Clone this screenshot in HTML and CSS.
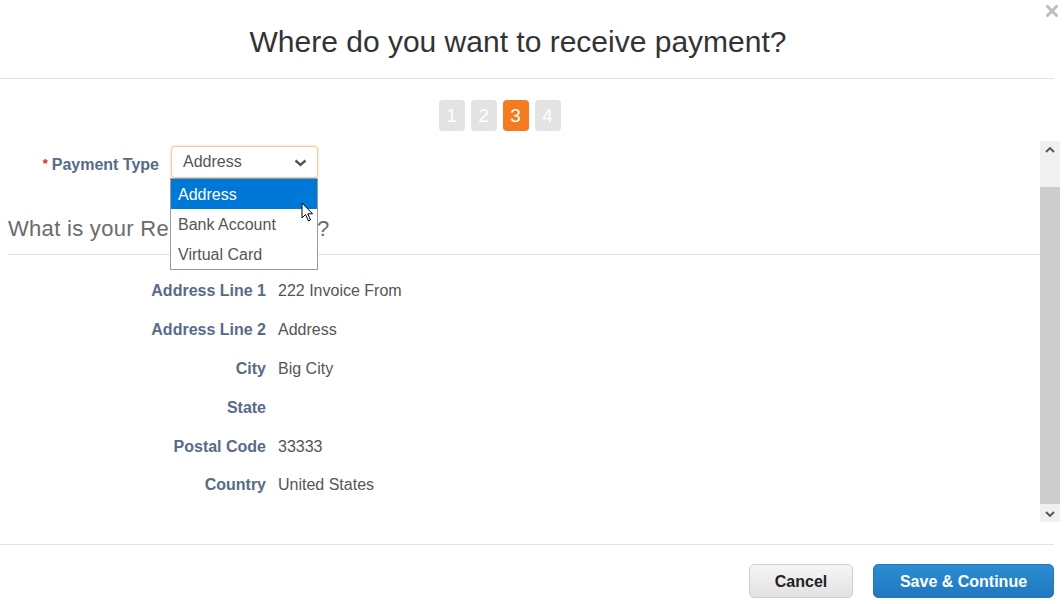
FILE: index.html
```html
<!DOCTYPE html>
<html>
<head>
<meta charset="utf-8">
<link rel="stylesheet" href="styles.css">
</head>
<body>
<div class="modal">
  <button class="close" aria-label="Close">
    <svg width="12" height="12" viewBox="0 0 12 12"><path d="M1.5 1.5 L10.5 10.5 M10.5 1.5 L1.5 10.5" stroke="#bdbdbd" stroke-width="3" stroke-linecap="square"/></svg>
  </button>
  <header class="header">
    <h1 class="title">Where do you want to receive payment?</h1>
  </header>
  <nav class="steps">
    <span class="step">1</span>
    <span class="step">2</span>
    <span class="step active">3</span>
    <span class="step">4</span>
  </nav>
  <div class="scroll-area">
    <div class="content">
      <div class="type-row">
        <label class="type-label"><span class="req">*</span>Payment Type</label>
        <div class="select-wrap">
          <div class="select">
            <span>Address</span>
            <svg class="chev" width="13" height="8" viewBox="0 0 13 8"><path d="M1.5 1.5 L6.5 6 L11.5 1.5" fill="none" stroke="#555" stroke-width="2.4"/></svg>
          </div>
          <ul class="options">
            <li class="opt selected">Address</li>
            <li class="opt">Bank Account</li>
            <li class="opt">Virtual Card</li>
          </ul>
          <svg class="cursor" width="14" height="21" viewBox="0 0 14 21"><path d="M1 1 L1 16 L4.5 12.5 L7.5 19 L9.5 18 L6.8 11.8 L11.5 11.8 Z" fill="#fff" stroke="#000" stroke-width="1" stroke-linejoin="miter"/></svg>
        </div>
      </div>
      <h2 class="section-title">What is your Remit To Address?</h2>
      <dl class="fields">
        <div class="field"><dt>Address Line 1</dt><dd>222 Invoice From</dd></div>
        <div class="field"><dt>Address Line 2</dt><dd>Address</dd></div>
        <div class="field"><dt>City</dt><dd>Big City</dd></div>
        <div class="field"><dt>State</dt><dd></dd></div>
        <div class="field"><dt>Postal Code</dt><dd>33333</dd></div>
        <div class="field"><dt>Country</dt><dd>United States</dd></div>
      </dl>
    </div>
    <div class="scrollbar">
      <div class="sb-btn">
        <svg width="10" height="6" viewBox="0 0 10 6"><path d="M1 5 L5 1 L9 5" fill="none" stroke="#505050" stroke-width="1.8"/></svg>
      </div>
      <div class="sb-track">
        <div class="sb-thumb"></div>
      </div>
      <div class="sb-btn">
        <svg width="10" height="6" viewBox="0 0 10 6"><path d="M1 1 L5 5 L9 1" fill="none" stroke="#505050" stroke-width="1.8"/></svg>
      </div>
    </div>
  </div>
  <footer class="footer">
    <button class="btn btn-cancel">Cancel</button>
    <button class="btn btn-primary">Save &amp; Continue</button>
  </footer>
</div>
</body>
</html>
```

FILE: styles.css
```css
* { box-sizing: border-box; }
html, body {
  margin: 0;
  padding: 0;
  background: #fff;
}
body {
  font-family: "Liberation Sans", Arial, sans-serif;
  color: #333;
}
.modal {
  position: relative;
  width: 1060px;
  height: 604px;
  overflow: hidden;
}
.close {
  position: absolute;
  top: 5px;
  left: 1046px;
  width: 12px;
  height: 12px;
  padding: 0;
  border: 0;
  background: none;
  display: flex;
}
.header {
  width: 1054px;
  height: 79px;
  border-bottom: 1px solid #e3e3e3;
  display: flex;
  align-items: center;
  justify-content: center;
  padding-right: 18px;
  padding-top: 6px;
}
.title {
  margin: 0;
  font-size: 30px;
  font-weight: normal;
  color: #333;
}
.steps {
  display: flex;
  justify-content: center;
  gap: 6px;
  margin-top: 21px;
  margin-bottom: 10px;
  width: 1054px;
  padding-right: 55px;
}
.step {
  width: 26px;
  height: 31px;
  border-radius: 4px;
  background: #e3e3e3;
  color: #fff;
  font-size: 19px;
  display: flex;
  align-items: center;
  justify-content: center;
}
.step.active {
  background: #f47b20;
}
.scroll-area {
  display: flex;
  height: 381px;
}
.content {
  flex: 1;
  min-width: 0;
}
.type-row {
  display: flex;
  align-items: center;
  padding-top: 5px;
}
.type-label {
  width: 171px;
  padding-right: 12px;
  text-align: right;
  font-weight: bold;
  font-size: 16px;
  color: #576b88;
  padding-top: 6px;
}
.req {
  color: #e0242b;
  font-size: 13px;
  margin-right: 4px;
  vertical-align: 2px;
}
.select-wrap {
  position: relative;
}
.select {
  width: 147px;
  height: 32px;
  border: 1px solid #f2c9a8;
  border-radius: 4px;
  box-shadow: 0 0 3px rgba(244, 123, 32, 0.35);
  display: flex;
  align-items: center;
  justify-content: space-between;
  padding: 0 10px 0 11px;
  font-size: 16px;
  color: #555;
  background: #fff;
}
.chev { margin-top: 2px; }
.options {
  position: absolute;
  top: 32px;
  left: -1px;
  width: 148px;
  margin: 0;
  padding: 0;
  list-style: none;
  border: 1px solid #9a9a9a;
  background: #fff;
  z-index: 5;
}
.opt {
  height: 30px;
  line-height: 31px;
  padding-left: 7px;
  font-size: 16px;
  color: #555;
}
.opt.selected {
  background: #0078d7;
  color: #fff;
}
.cursor {
  position: absolute;
  top: 56px;
  left: 130px;
  z-index: 6;
}
.section-title {
  margin: 36px 0 0 8px;
  padding-bottom: 10px;
  line-height: 30px;
  font-size: 22px;
  letter-spacing: 0.3px;
  font-weight: normal;
  color: #6b6b6b;
  border-bottom: 1px solid #e3e3e3;
}
.fields {
  margin: 0;
  padding-top: 17px;
}
.field {
  display: flex;
  height: 38.8px;
  align-items: center;
  font-size: 16px;
}
.field dt {
  width: 266px;
  text-align: right;
  font-weight: bold;
  color: #576b88;
}
.field dd {
  margin: 0 0 0 12px;
  color: #555;
}
.scrollbar {
  width: 20px;
  display: flex;
  flex-direction: column;
  background: #f0f0f0;
}
.sb-btn {
  height: 17px;
  display: flex;
  align-items: center;
  justify-content: center;
}
.sb-track {
  flex: 1;
  padding-top: 29px;
  padding-bottom: 1px;
  display: flex;
  flex-direction: column;
}
.sb-thumb {
  flex: 1;
  background: #cdcdcd;
}
.footer {
  width: 1054px;
  margin-top: 22px;
  border-top: 1px solid #e3e3e3;
  padding-top: 19px;
  display: flex;
  justify-content: flex-end;
  gap: 20px;
}
.btn {
  height: 34px;
  border-radius: 5px;
  font-family: "Liberation Sans", Arial, sans-serif;
  font-size: 16px;
  font-weight: bold;
  padding-top: 2px;
  cursor: pointer;
}
.btn-cancel {
  width: 104px;
  border: 1px solid #cfcfcf;
  background: linear-gradient(#f5f5f5, #e2e2e2);
  color: #222;
}
.btn-primary {
  width: 181px;
  border: 1px solid #2178bb;
  background: linear-gradient(#2b8dd3, #2078bf);
  color: #fff;
}
```
